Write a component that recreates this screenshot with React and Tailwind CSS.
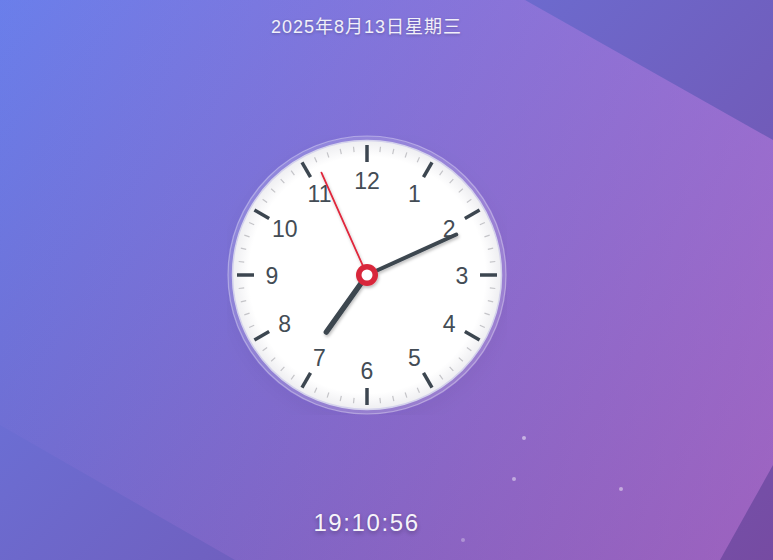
import React from "react";

const CX = 140;
const CY = 140;

function pt(angleDeg, r) {
  const a = (angleDeg * Math.PI) / 180;
  return [CX + Math.sin(a) * r, CY - Math.cos(a) * r];
}

function Clock() {
  const ticks = [];
  for (let i = 0; i < 60; i++) {
    const major = i % 5 === 0;
    const a = i * 6;
    const [x1, y1] = pt(a, major ? 130 : 129);
    const [x2, y2] = pt(a, major ? 113 : 123.5);
    ticks.push(
      <line
        key={i}
        x1={x1}
        y1={y1}
        x2={x2}
        y2={y2}
        stroke={major ? "#3c4650" : "#c4c4c8"}
        strokeWidth={major ? 3.5 : 1.2}
      />
    );
  }
  const nums = [];
  for (let n = 1; n <= 12; n++) {
    const [x, y] = pt(n * 30, 95);
    nums.push(
      <text
        key={n}
        x={x}
        y={y + 1}
        textAnchor="middle"
        dominantBaseline="central"
        fontSize="23"
        fill="#434c55"
        fontFamily="'Liberation Sans', Arial, sans-serif"
      >
        {n}
      </text>
    );
  }
  const hourA = (7 + 10 / 60 + 56 / 3600) * 30;
  const minA = (10 + 56 / 60) * 6;
  const secA = 56 * 6;
  const [hx, hy] = pt(hourA, 70);
  const [mx, my] = pt(minA, 98);
  const [sx, sy] = pt(secA, 112);

  return (
    <svg width="280" height="280" viewBox="0 0 280 280" className="block">
      <defs>
        <radialGradient id="face" cx="50%" cy="50%" r="50%">
          <stop offset="0%" stopColor="#ffffff" />
          <stop offset="88%" stopColor="#ffffff" />
          <stop offset="100%" stopColor="#eeeef1" />
        </radialGradient>
        <filter id="hs" x="-50%" y="-50%" width="200%" height="200%">
          <feDropShadow dx="1" dy="2" stdDeviation="1.5" floodColor="#000" floodOpacity="0.25" />
        </filter>
        <filter id="cs" x="-20%" y="-20%" width="140%" height="140%">
          <feDropShadow dx="0" dy="6" stdDeviation="8" floodColor="#1e1050" floodOpacity="0.25" />
        </filter>
      </defs>
      <circle cx={CX} cy={CY} r="139" fill="rgba(255,255,255,0.14)" stroke="rgba(255,255,255,0.35)" strokeWidth="1.2" filter="url(#cs)" />
      <circle cx={CX} cy={CY} r="134.5" fill="url(#face)" stroke="#d4d2ec" strokeWidth="1.5" />
      {ticks}
      {nums}
      <g filter="url(#hs)" strokeLinecap="round">
        <line x1={CX} y1={CY} x2={hx} y2={hy} stroke="#3c4650" strokeWidth="5.5" />
        <line x1={CX} y1={CY} x2={mx} y2={my} stroke="#3c4650" strokeWidth="4" />
        <line x1={CX} y1={CY} x2={sx} y2={sy} stroke="#e0283c" strokeWidth="1.8" />
        <circle cx={CX} cy={CY} r="11" fill="#d8283a" />
      </g>
      <circle cx={CX} cy={CY} r="5.5" fill="#ffffff" />
    </svg>
  );
}

export default function App() {
  return (
    <div className="relative w-[773px] h-[560px] overflow-hidden bg-[linear-gradient(135deg,#667eea_0%,#764ba2_100%)]">
      <svg className="absolute inset-0" width="773" height="560" viewBox="0 0 773 560">
        <defs>
          <linearGradient id="band" x1="0" y1="0" x2="1" y2="0">
            <stop offset="0%" stopColor="#f093fb" stopOpacity="0.03" />
            <stop offset="100%" stopColor="#f093fb" stopOpacity="0.32" />
          </linearGradient>
        </defs>
        <polygon points="525,0 773,140 773,465 720,560 235,560 0,425 0,0" fill="url(#band)" />
      </svg>

      <div className="relative w-[733px] flex flex-col items-center">
        <div
          className="mt-[14px] text-[18px] leading-[26px] tracking-[1px] text-white/90 [text-shadow:0_1px_3px_rgba(0,0,0,0.25)]"
          style={{ fontFamily: "'Liberation Sans', 'Noto Sans CJK SC', sans-serif" }}
        >
          2025年8月13日星期三
        </div>
        <div className="mt-[95px]">
          <Clock />
        </div>
        <div
          className="mt-[92px] text-[24px] leading-[32px] tracking-[1.6px] text-white/95 [text-shadow:0_2px_4px_rgba(0,0,0,0.3)]"
          style={{ fontFamily: "'Liberation Sans', sans-serif" }}
        >
          19:10:56
        </div>
      </div>

      <div className="absolute left-[522px] top-[436px] w-[4px] h-[4px] rounded-full bg-white/50" />
      <div className="absolute left-[512px] top-[477px] w-[4px] h-[4px] rounded-full bg-white/45" />
      <div className="absolute left-[619px] top-[487px] w-[4px] h-[4px] rounded-full bg-white/45" />
      <div className="absolute left-[461px] top-[538px] w-[4px] h-[4px] rounded-full bg-white/30" />
    </div>
  );
}
